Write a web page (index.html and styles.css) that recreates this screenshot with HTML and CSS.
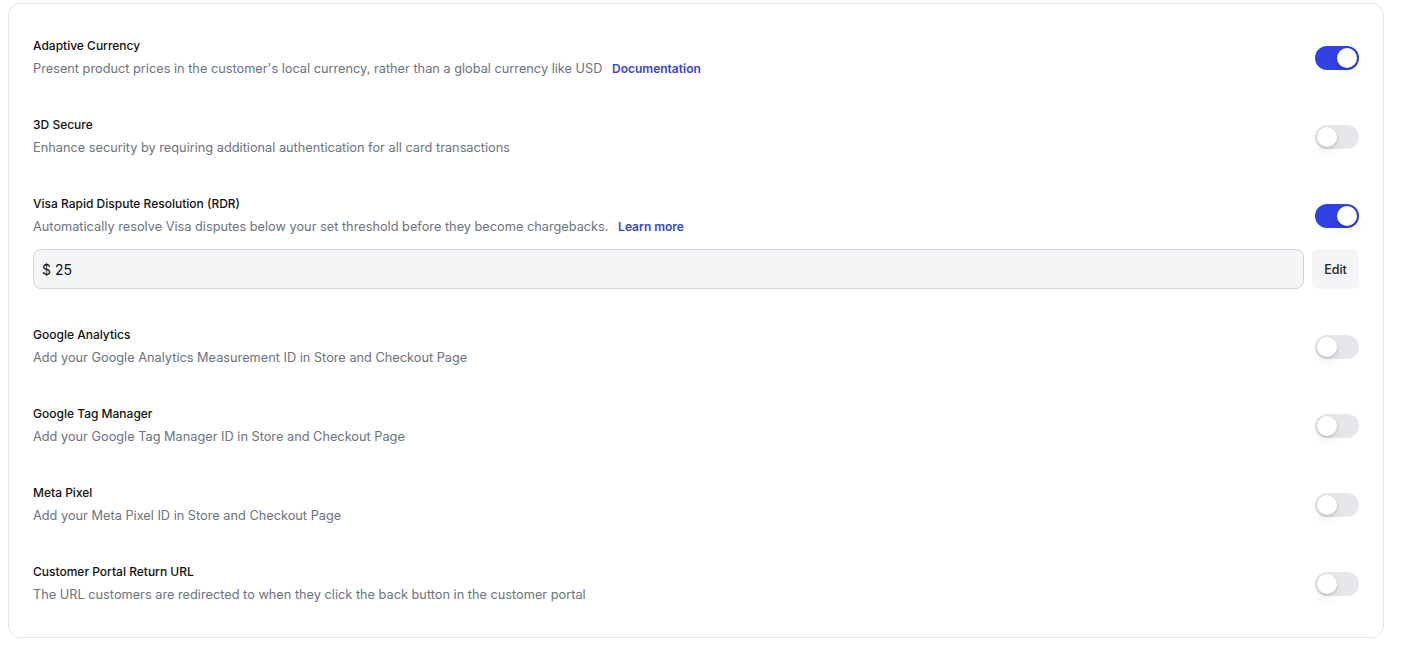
FILE: index.html
```html
<!DOCTYPE html>
<html lang="en">

<head>
    <meta charset="UTF-8">
    <meta name="viewport" content="width=device-width, initial-scale=1.0">
    <title>Store Settings</title>
    <link rel="stylesheet" href="styles.css">
</head>

<body>
    <div class="card">
        <div class="setting">
            <div class="setting-head">
                <div class="setting-text">
                    <div class="setting-title">Adaptive Currency</div>
                    <div class="setting-desc">Present product prices in the customer's local currency, rather than a global currency like USD <a href="#" class="link">Documentation</a></div>
                </div>
                <button class="toggle on" aria-label="Adaptive Currency"></button>
            </div>
        </div>

        <div class="setting">
            <div class="setting-head">
                <div class="setting-text">
                    <div class="setting-title">3D Secure</div>
                    <div class="setting-desc">Enhance security by requiring additional authentication for all card transactions</div>
                </div>
                <button class="toggle" aria-label="3D Secure"></button>
            </div>
        </div>

        <div class="setting">
            <div class="setting-head">
                <div class="setting-text">
                    <div class="setting-title">Visa Rapid Dispute Resolution (RDR)</div>
                    <div class="setting-desc">Automatically resolve Visa disputes below your set threshold before they become chargebacks. <a href="#" class="link">Learn more</a></div>
                </div>
                <button class="toggle on" aria-label="Visa Rapid Dispute Resolution"></button>
            </div>
            <div class="threshold">
                <div class="amount-field">$ 25</div>
                <button class="btn-edit">Edit</button>
            </div>
        </div>

        <div class="setting">
            <div class="setting-head">
                <div class="setting-text">
                    <div class="setting-title">Google Analytics</div>
                    <div class="setting-desc">Add your Google Analytics Measurement ID in Store and Checkout Page</div>
                </div>
                <button class="toggle" aria-label="Google Analytics"></button>
            </div>
        </div>

        <div class="setting">
            <div class="setting-head">
                <div class="setting-text">
                    <div class="setting-title">Google Tag Manager</div>
                    <div class="setting-desc">Add your Google Tag Manager ID in Store and Checkout Page</div>
                </div>
                <button class="toggle" aria-label="Google Tag Manager"></button>
            </div>
        </div>

        <div class="setting">
            <div class="setting-head">
                <div class="setting-text">
                    <div class="setting-title">Meta Pixel</div>
                    <div class="setting-desc">Add your Meta Pixel ID in Store and Checkout Page</div>
                </div>
                <button class="toggle" aria-label="Meta Pixel"></button>
            </div>
        </div>

        <div class="setting">
            <div class="setting-head">
                <div class="setting-text">
                    <div class="setting-title">Customer Portal Return URL</div>
                    <div class="setting-desc">The URL customers are redirected to when they click the back button in the customer portal</div>
                </div>
                <button class="toggle" aria-label="Customer Portal Return URL"></button>
            </div>
        </div>
    </div>
</body>

</html>
```

FILE: styles.css
```css
body {
    font-family: Inter, "Noto Sans", sans-serif;
    margin: 3px 21px 8px 8px;
    background-color: #fff;
    color: #111827;
}

.card {
    border: 1px solid #e5e7eb;
    border-radius: 12px;
    padding: 15px 24px 13px;
    background: #fff;
}

.setting {
    padding: 18px 0 19px;
}

.setting-head {
    display: flex;
    align-items: center;
    justify-content: space-between;
    gap: 24px;
}

.setting-title {
    font-size: 12px;
    font-weight: 500;
    line-height: 18px;
    color: #111;
}

.setting-desc {
    margin-top: 3px;
    font-size: 12.75px;
    line-height: 21px;
    color: #6b7280;
}

.link {
    margin-left: 6px;
    font-size: 12px;
    font-weight: 600;
    color: #3442e0;
    text-decoration: none;
}

/* switch */
.toggle {
    position: relative;
    flex-shrink: 0;
    width: 44px;
    height: 24px;
    padding: 0;
    border: none;
    border-radius: 12px;
    background: #e5e7eb;
    cursor: pointer;
}

.toggle::after {
    content: "";
    position: absolute;
    top: 2px;
    left: 2px;
    width: 20px;
    height: 20px;
    border-radius: 50%;
    background: #fff;
    box-shadow: 0 1px 3px rgba(0, 0, 0, 0.18), 0 6px 10px rgba(0, 0, 0, 0.06);
    transition: left 0.2s ease;
}

.toggle.on {
    background: #3241e3;
}

.toggle.on::after {
    left: 22px;
}

.threshold {
    display: flex;
    gap: 8px;
    margin-top: 12px;
}

.amount-field {
    flex: 1;
    height: 40px;
    box-sizing: border-box;
    padding: 0 8px;
    display: flex;
    align-items: center;
    font-size: 14px;
    border: 1px solid #d1d5db;
    border-radius: 8px;
    background: #f4f5f7;
    color: #111;
}

.btn-edit {
    width: 47px;
    height: 40px;
    border: none;
    border-radius: 6px;
    background: #f4f5f7;
    font-family: inherit;
    font-size: 12.5px;
    font-weight: 500;
    color: #222;
    cursor: pointer;
}
```
